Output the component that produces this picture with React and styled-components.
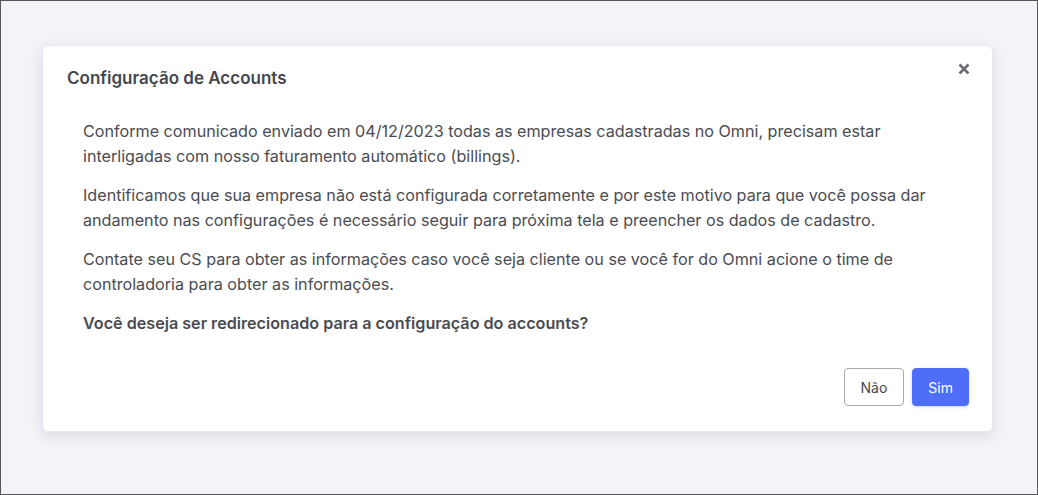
import React from 'react'
import styled, { createGlobalStyle } from 'styled-components'

const GlobalStyle = createGlobalStyle`
  html, body {
    margin: 0;
    padding: 0;
  }
  body {
    font-family: Inter, 'Noto Sans', sans-serif;
    -webkit-font-smoothing: antialiased;
  }
`

// Backdrop behind the dialog
const Page = styled.div`
  box-sizing: border-box;
  height: 100vh;
  border: 1px solid #55575c;
  background: #f2f4f8;
  padding: 44px 44px 0 41px;
`

// Dialog card
const Modal = styled.div`
  background: #ffffff;
  border: 1px solid #e6e8ee;
  border-radius: 6px;
  box-shadow: 0 4px 14px rgba(40, 48, 70, 0.12);
`

const Header = styled.div`
  display: flex;
  align-items: flex-start;
  justify-content: space-between;
  padding: 20px 18px 0 24px;
`

const Title = styled.h2`
  margin: 0;
  font-size: 17px;
  line-height: 24px;
  font-weight: 600;
  color: #45474d;
`

const Close = styled.button`
  border: 0;
  background: none;
  padding: 0;
  margin-top: -7px;
  width: 20px;
  height: 20px;
  display: flex;
  align-items: center;
  justify-content: center;
  cursor: pointer;
  color: #6b6d72;
`

const Body = styled.div`
  padding: 29px 38px 0 40px;
`

const Paragraph = styled.p`
  margin: 0 0 14px;
  font-size: 16.15px;
  line-height: 25px;
  color: #4a4c52;
  font-weight: ${p => (p.strong ? 600 : 400)};
`

const Footer = styled.div`
  display: flex;
  justify-content: flex-end;
  gap: 8px;
  padding: 18px 23px 25px;
`

const Button = styled.button`
  height: 38px;
  padding: 0 ${p => (p.primary ? 15 : 16)}px;
  border-radius: 4px;
  font-family: inherit;
  font-size: 14px;
  cursor: pointer;
  border: 1px solid ${p => (p.primary ? '#4f6ef7' : '#a9abb3')};
  background: ${p => (p.primary ? '#4f6ef7' : '#ffffff')};
  color: ${p => (p.primary ? '#ffffff' : '#45474d')};
  box-shadow: ${p => (p.primary ? '0 1px 3px rgba(79, 110, 247, 0.3)' : 'none')};
`

const XIcon = () => (
  <svg width="12" height="12" viewBox="0 0 12 12">
    <path d="M1.5 1.5 L10.5 10.5 M10.5 1.5 L1.5 10.5" stroke="currentColor" strokeWidth="2.6" strokeLinecap="butt" />
  </svg>
)

export default function App() {
  return (
    <>
      <GlobalStyle />
      <Page>
        <Modal>
          <Header>
            <Title>Configuração de Accounts</Title>
            <Close aria-label="Fechar"><XIcon /></Close>
          </Header>
          <Body>
            <Paragraph>
              Conforme comunicado enviado em 04/12/2023 todas as empresas cadastradas no Omni, precisam estar
              interligadas com nosso faturamento automático (billings).
            </Paragraph>
            <Paragraph>
              Identificamos que sua empresa não está configurada corretamente e por este motivo para que você possa dar
              andamento nas configurações é necessário seguir para próxima tela e preencher os dados de cadastro.
            </Paragraph>
            <Paragraph>
              Contate seu CS para obter as informações caso você seja cliente ou se você for do Omni acione o time de
              controladoria para obter as informações.
            </Paragraph>
            <Paragraph strong>Você deseja ser redirecionado para a configuração do accounts?</Paragraph>
          </Body>
          <Footer>
            <Button>Não</Button>
            <Button primary>Sim</Button>
          </Footer>
        </Modal>
      </Page>
    </>
  )
}
